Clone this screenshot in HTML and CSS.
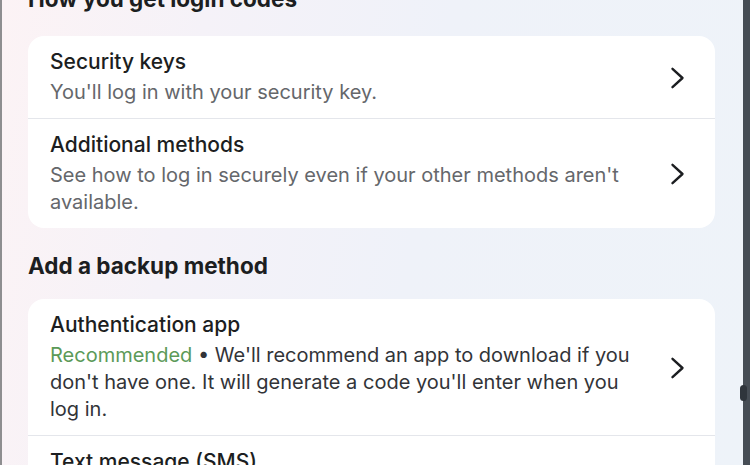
FILE: index.html
```html
<!DOCTYPE html>
<html lang="en">
<head>
<meta charset="utf-8">
<title>Two-factor authentication</title>
<link rel="stylesheet" href="styles.css">
</head>
<body>
<div class="frame">
  <div class="edge-left"></div>
  <main class="panel">
    <h2 class="section-title first">How you get login codes</h2>
    <div class="card">
      <div class="row">
        <div class="row-text">
          <div class="row-title">Security keys</div>
          <div class="row-desc">You'll log in with your security key.</div>
        </div>
        <svg class="chev" width="15" height="22" viewBox="0 0 15 22"><polyline points="2.5,1.8 12.5,11 2.5,20.2" fill="none" stroke="#1c1e21" stroke-width="2.4" stroke-linecap="round" stroke-linejoin="round"/></svg>
      </div>
      <div class="row">
        <div class="row-text">
          <div class="row-title">Additional methods</div>
          <div class="row-desc">See how to log in securely even if your other methods aren't available.</div>
        </div>
        <svg class="chev" width="15" height="22" viewBox="0 0 15 22"><polyline points="2.5,1.8 12.5,11 2.5,20.2" fill="none" stroke="#1c1e21" stroke-width="2.4" stroke-linecap="round" stroke-linejoin="round"/></svg>
      </div>
    </div>
    <h2 class="section-title">Add a backup method</h2>
    <div class="card">
      <div class="row">
        <div class="row-text">
          <div class="row-title">Authentication app</div>
          <div class="row-desc dark"><span class="green">Recommended</span> • We'll recommend an app to download if you don't have one. It will generate a code you'll enter when you log in.</div>
        </div>
        <svg class="chev" width="15" height="22" viewBox="0 0 15 22"><polyline points="2.5,1.8 12.5,11 2.5,20.2" fill="none" stroke="#1c1e21" stroke-width="2.4" stroke-linecap="round" stroke-linejoin="round"/></svg>
      </div>
      <div class="row">
        <div class="row-text">
          <div class="row-title">Text message (SMS)</div>
          <div class="row-desc">We'll send a code to your phone number.</div>
        </div>
        <svg class="chev" width="15" height="22" viewBox="0 0 15 22"><polyline points="2.5,1.8 12.5,11 2.5,20.2" fill="none" stroke="#1c1e21" stroke-width="2.4" stroke-linecap="round" stroke-linejoin="round"/></svg>
      </div>
    </div>
  </main>
  <div class="edge-right"><span class="knob"></span></div>
</div>
</body>
</html>
```
FILE: styles.css
```css
html, body {
  margin: 0;
  padding: 0;
  height: 100%;
  overflow: hidden;
}
body {
  font-family: Inter, "Noto Sans", "Liberation Sans", sans-serif;
  color: #1c1e21;
}
.frame {
  display: flex;
  height: 465px;
  width: 750px;
}
.edge-left {
  width: 2px;
  flex: none;
  background: #8e8e90;
}
.edge-right {
  width: 7px;
  flex: none;
  background: #464d55;
  position: relative;
}
.knob {
  position: absolute;
  left: -3px;
  top: 385px;
  width: 7px;
  height: 16px;
  border-radius: 4px;
  background: #2f353c;
}
.panel {
  flex: 1;
  padding: 0 28px 0 26px;
  background: linear-gradient(100deg, #fcf3f5 0%, #f5f2f8 25%, #eff2f9 55%, #eef3f9 100%);
  overflow: hidden;
}
.section-title {
  margin: 24px 0 19px;
  font-size: 22.5px;
  line-height: 28px;
  font-weight: 700;
  color: #1c1e21;
}
.section-title.first {
  margin-top: -15px;
  margin-bottom: 23px;
}
.card {
  background: #fff;
  border-radius: 16px;
  overflow: hidden;
}
.row {
  display: flex;
  align-items: center;
  gap: 20px;
  padding: 13px 30px 12px 22px;
}
.row + .row {
  border-top: 1px solid #e4e6eb;
}
.row-text {
  flex: 1;
  min-width: 0;
}
.row-title {
  font-size: 21px;
  line-height: 26px;
  font-weight: 500;
  margin-bottom: 4px;
}
.row-desc {
  font-size: 20px;
  line-height: 27px;
  color: #65676b;
}
.row-desc.dark {
  color: #323438;
}
.green {
  color: #5b9a58;
}
.chev {
  flex: none;
  display: block;
}
```
